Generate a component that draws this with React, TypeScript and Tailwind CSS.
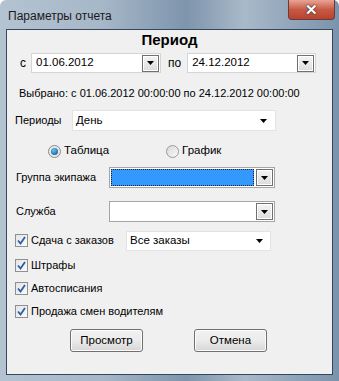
import React from 'react';

const font = { fontFamily: '"Liberation Sans", Arial, sans-serif' };

const Arrow = () => (
  <svg width="7" height="4" viewBox="0 0 7 4">
    <polygon points="0,0 7,0 3.5,4" fill="#000" />
  </svg>
);

const DropButton = () => (
  <div className="w-[17px] h-[17px] border border-[#707070] bg-gradient-to-b from-[#f4f4f4] to-[#dcdcdc] flex items-center justify-center shadow-[inset_0_0_0_1px_#fff]">
    <Arrow />
  </div>
);

const DateBox = ({ value, width }: { value: string; width: string }) => (
  <div className={`${width} h-[20px] bg-white border border-[#d5d5d5] flex items-center justify-between pl-[4px] pr-[1px]`}>
    <span className="text-[11.5px] text-black">{value}</span>
    <DropButton />
  </div>
);

const Check = ({ label }: { label: string }) => (
  <div className="flex items-center">
    <div className="w-[13px] h-[13px] border border-[#8f8f8f] bg-gradient-to-br from-[#e4e4e4] to-[#fbfbfb] flex items-center justify-center">
      <svg width="9" height="9" viewBox="0 0 9 9">
        <path d="M1 4.5 L3.5 7.5 L8 1" stroke="#2a5fa8" strokeWidth="1.8" fill="none" />
      </svg>
    </div>
    <span className="ml-[3px] text-[11px] text-black">{label}</span>
  </div>
);

export default function App() {
  return (
    <div
      className="w-[339px] h-[381px] rounded-t-[6px] flex flex-col bg-[linear-gradient(to_right,#b4c3d1_0%,#a6b7c8_30%,#7e95ac_55%,#a9b9c9_72%,#7a93ac_100%)]"
      style={font}
    >
      {/* Title bar */}
      <div className="h-[29px] flex items-start justify-between">
        <span className="ml-[8px] mt-[7px] text-[12px] text-[#1a1a1a]">Параметры отчета</span>
        <div className="mr-[4px] w-[47px] h-[20px] rounded-b-[4px] border border-[#6a3a36] border-t-0 bg-gradient-to-b from-[#e8a395] via-[#c75a45] to-[#b8422f] flex items-center justify-center">
          <span className="text-white font-bold text-[15px] leading-none [text-shadow:0_0_1px_#222,0_0_2px_#333]">✕</span>
        </div>
      </div>

      {/* Client area */}
      <div className="mx-[6px] h-[346px] border border-[#35475a] bg-[#f0f0f0] flex flex-col text-black">
        <div className="mt-[2px] h-[16px] text-center font-bold text-[15px] leading-[16px]">Период</div>

        <div className="mt-[5px] flex items-center h-[20px]">
          <span className="ml-[13px] text-[12px]">с</span>
          <div className="ml-[5px]">
            <DateBox value="01.06.2012" width="w-[130px]" />
          </div>
          <span className="ml-[7px] text-[12px]">по</span>
          <div className="ml-[6px]">
            <DateBox value="24.12.2012" width="w-[129px]" />
          </div>
        </div>

        <div className="mt-[13px] ml-[12px] h-[14px] text-[11px] leading-[14px]">
          Выбрано: с 01.06.2012 00:00:00 по 24.12.2012 00:00:00
        </div>

        <div className="mt-[10px] flex items-center h-[21px]">
          <span className="ml-[8px] w-[57px] text-[11px]">Периоды</span>
          <div className="w-[204px] h-[21px] bg-white border border-[#e3e3e3] flex items-center justify-between pl-[3px] pr-[8px]">
            <span className="text-[11.5px]">День</span>
            <Arrow />
          </div>
        </div>

        <div className="mt-[13px] flex items-center h-[14px]">
          <div className="ml-[41px] w-[13px] h-[13px] rounded-full border border-[#8a8a8a] bg-[#e8e8e8] flex items-center justify-center">
            <div className="w-[7px] h-[7px] rounded-full bg-[radial-gradient(circle_at_40%_35%,#6fc3f0,#1c6ea8_70%,#0d4a78)]" />
          </div>
          <span className="ml-[3px] text-[11.5px]">Таблица</span>
          <div className="ml-[57px] w-[13px] h-[13px] rounded-full border border-[#9a9a9a] bg-gradient-to-br from-[#d8d8d8] to-[#fafafa]" />
          <span className="ml-[3px] text-[11.5px]">График</span>
        </div>

        <div className="mt-[9px] flex items-center h-[21px]">
          <span className="ml-[9px] w-[93px] text-[11px]">Группа экипажа</span>
          <div className="w-[166px] h-[21px] bg-white border border-[#a5a5a5] flex items-center p-[1px]">
            <div className="flex-1 h-full bg-[#3399ff] border border-dotted border-[#222]" />
            <div className="ml-[2px]">
              <DropButton />
            </div>
          </div>
        </div>

        <div className="mt-[13px] flex items-center h-[21px]">
          <span className="ml-[9px] w-[93px] text-[11px]">Служба</span>
          <div className="w-[166px] h-[21px] bg-white border border-[#a5a5a5] flex items-center justify-end p-[1px]">
            <DropButton />
          </div>
        </div>

        <div className="mt-[9px] flex items-start h-[20px]">
          <div className="ml-[8px] w-[111px] pt-[1px]">
            <Check label="Сдача с заказов" />
          </div>
          <div className="w-[145px] h-[20px] bg-white border border-[#e3e3e3] flex items-center justify-between pl-[3px] pr-[7px]">
            <span className="text-[11.5px]">Все заказы</span>
            <Arrow />
          </div>
        </div>

        <div className="mt-[6px] ml-[8px] h-[16px] flex items-center">
          <Check label="Штрафы" />
        </div>
        <div className="mt-[7px] ml-[8px] h-[16px] flex items-center">
          <Check label="Автосписания" />
        </div>
        <div className="mt-[7px] ml-[8px] h-[16px] flex items-center">
          <Check label="Продажа смен водителям" />
        </div>

        <div className="mt-[10px] flex h-[23px]">
          <button className="ml-[63px] w-[73px] h-[23px] rounded-[3px] border border-[#707070] bg-gradient-to-b from-[#f2f2f2] via-[#ebebeb] to-[#d6d6d6] text-[11.5px] shadow-[inset_0_0_0_1px_#fcfcfc]">
            Просмотр
          </button>
          <button className="ml-[51px] w-[73px] h-[23px] rounded-[3px] border border-[#707070] bg-gradient-to-b from-[#f2f2f2] via-[#ebebeb] to-[#d6d6d6] text-[11.5px] shadow-[inset_0_0_0_1px_#fcfcfc]">
            Отмена
          </button>
        </div>
      </div>
    </div>
  );
}
